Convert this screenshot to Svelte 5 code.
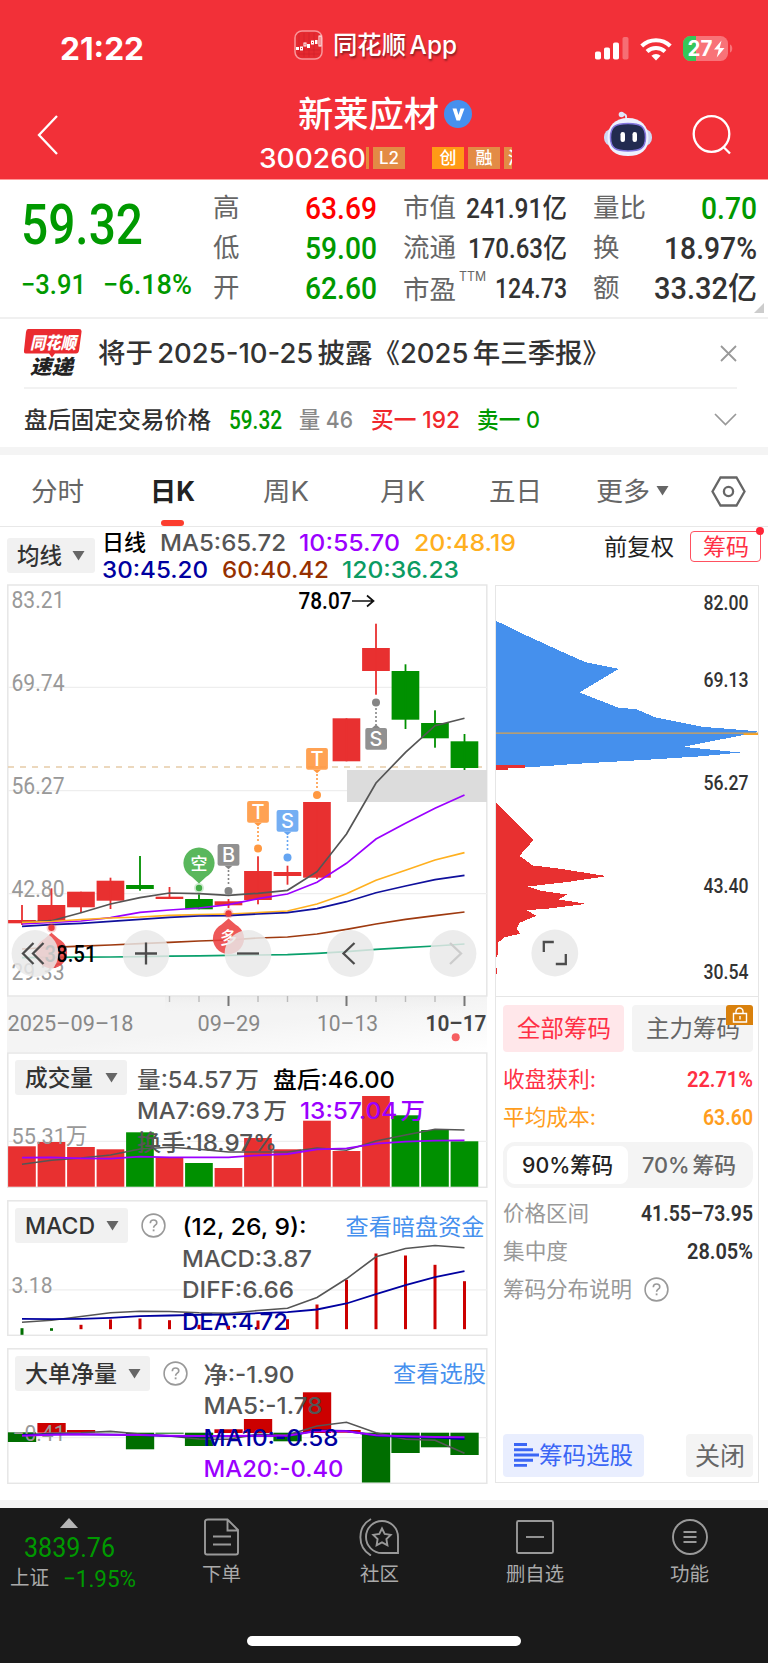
<script lang="ts">
  type Candle = [number, number, number, number, boolean]; // body top, body bottom, high, low, up

  const STEP = 29.5;
  const cx = (i: number) => 22 + i * STEP;
  const line = (ys: number[]) => ys.map((y, i) => `${cx(i)},${y}`).join(' ');

  const quotes = [
    [
      { label: '高', value: '63.69', w: 72, tone: 'hot' },
      { label: '低', value: '59.00', w: 72, tone: 'down' },
      { label: '开', value: '62.60', w: 72, tone: 'down' }
    ],
    [
      { label: '市值', value: '241.91亿', w: 101, tone: 'ink' },
      { label: '流通', value: '170.63亿', w: 99, tone: 'ink' },
      { label: '市盈', value: '124.73', w: 72, tone: 'ink', sup: 'TTM' }
    ],
    [
      { label: '量比', value: '0.70', w: 56, tone: 'down' },
      { label: '换', value: '18.97%', w: 93, tone: 'ink' },
      { label: '额', value: '33.32亿', w: 103, tone: 'ink' }
    ]
  ];

  const candles: Candle[] = [
    [920, 923.3, 905, 925, true],
    [905, 921, 888.3, 921, true],
    [891.7, 907.3, 891.7, 913, true],
    [880.7, 900.7, 877.7, 909, true],
    [885, 889, 856, 890.7, false],
    [896.7, 899, 887, 899, true],
    [899, 909.3, 894.3, 909.3, false],
    [901.3, 905.3, 899, 908, true],
    [871, 900, 856.3, 904.3, true],
    [872, 876, 865.7, 884.7, true],
    [802, 877.7, 802, 879, true],
    [718.3, 761.3, 718.3, 761.3, true],
    [648, 671, 623.7, 694.7, true],
    [671, 719.7, 664.3, 729, false],
    [723, 738.3, 710.3, 747.7, false],
    [741.3, 768, 734, 770, false]
  ];

  const maLines = [
    { color: '#0aa06c', ys: [957.7, 957.4, 957.2, 957, 956.7, 956.2, 955.8, 955.3, 955, 954.7, 953.3, 951.7, 949.3, 947.7, 946, 944] },
    { color: '#9e3a10', ys: [949, 947.4, 946.2, 945, 943.7, 942.3, 941, 940, 938, 937, 934, 929.3, 924, 919.3, 915.7, 912] },
    { color: '#555', ys: [922.3, 920.7, 912.7, 904, 897.7, 893, 893.7, 895.3, 893.3, 890.3, 871.7, 834, 783, 752.3, 725.7, 718.3] },
    { color: '#9b00ff', ys: [924, 922.5, 921, 917.7, 912.3, 910, 908, 904.7, 898.7, 894, 882.3, 863.3, 839, 823.3, 808.3, 795] },
    { color: '#ffb01f', ys: [922.3, 921.5, 919.5, 918, 917, 915.3, 914.7, 914, 912.7, 911, 904, 893.7, 880.3, 870.3, 860, 852.7] },
    { color: '#10109c', ys: [926.3, 924.7, 923.3, 921.3, 919.3, 917.3, 916, 915.7, 914, 912.7, 908.7, 901.7, 892.7, 886, 879.7, 875.3] }
  ];

  const priceLabels = [['83.21', 607.5], ['69.74', 691], ['56.27', 793.5], ['42.80', 896.7], ['29.33', 980.3]] as [string, number][];
  const chipLabels = [['82.00', 610], ['69.13', 687.3], ['56.27', 790.3], ['43.40', 893.7], ['30.54', 979]] as [string, number][];

  // square tags hanging above a candle
  const tags = [
    { x: 258, y: 801, dot: 848.5, text: 'T', color: '#ff9840' },
    { x: 287.5, y: 810, dot: 857.5, text: 'S', color: '#65a5f2' },
    { x: 317, y: 748, dot: 795, text: 'T', color: '#ff9840' },
    { x: 228.5, y: 844, dot: 891, text: 'B', color: '#858585' }
  ];

  const ticks = Array.from({ length: 11 }, (_, i) => i + 5);

  const volume = [1146.3, 1142, 1147, 1149.3, 1132.3, 1157.3, 1163, 1168, 1138, 1149.3, 1120.7, 1151, 1096, 1115.3, 1130, 1141.3];
  const volumeDown = [4, 6, 13, 14, 15];
  const volMa7 = [1164.3, 1160.3, 1158, 1155, 1149, 1147.3, 1149.3, 1152, 1152, 1152, 1148, 1150.3, 1141, 1135, 1129.3, 1130];
  const volMa13 = [1157.7, 1157.3, 1158.3, 1158.7, 1156.7, 1157.3, 1157.3, 1157.3, 1155.3, 1154, 1149.3, 1148.3, 1143.7, 1141.7, 1140.7, 1140.3];

  const macd = [[1327.7, 1334.3], [1327.7, 1330.3], [1324.3, 1328.7], [1319, 1328.7], [1318, 1328.7], [1319.7, 1328.7], [1324.3, 1328.7], [1325.3, 1328.7], [1320, 1328.7], [1318.7, 1328.7], [1304, 1328.7], [1279.3, 1328.7], [1253, 1328.7], [1255, 1328.7], [1264.3, 1328.7], [1280.7, 1328.7]];
  const diff = [1321.7, 1319.7, 1316, 1312.3, 1310.7, 1311, 1312.3, 1312.7, 1310, 1307.7, 1297, 1278.3, 1256.3, 1248, 1245, 1247.3];
  const dea = [1318.3, 1318.7, 1318.3, 1317.3, 1315.7, 1315, 1314.3, 1314, 1312.7, 1311.7, 1309, 1303, 1293.7, 1284.7, 1276.7, 1270.7];

  const net = [[1432.3, 1442], [1423, 1432.7], [1430, 1432.7], [1432.4, 1432.7], [1432.7, 1449.3], [1432.7, 1433.7], [1432.7, 1446], [1429.3, 1433], [1419, 1433], [1432.7, 1441.3], [1392.3, 1433], [1430, 1432.7], [1432.7, 1482.5], [1432.7, 1453], [1432.7, 1447.3], [1432.7, 1455]];
  const netUp = [1, 2, 7, 8, 10, 11];
  const netMa5 = [1435, 1433.3, 1432.7, 1431.3, 1434, 1436, 1439, 1439.3, 1434.3, 1435, 1426, 1422.3, 1432.7, 1439.3, 1440.3, 1453.3];
  const netMa10 = [1435, 1434.3, 1434.3, 1434.7, 1435, 1436, 1436.7, 1436.3, 1435.7, 1436, 1430.3, 1431, 1435.7, 1437, 1437.7, 1439];
  const netMa20 = [1435.7, 1434.7, 1434.3, 1434.7, 1435, 1435.7, 1436, 1436, 1435.7, 1435.7, 1431, 1431.3, 1435.3, 1436.3, 1437, 1437.3];
</script>

<!-- one line of text set to an exact width -->
{#snippet fit(text: string, w: number, size: number, cls = '')}
  <svg class="fit {cls}" width={w} height={size}>
    <text x="0" y={size * 0.87} font-size={size} textLength={w} lengthAdjust="spacingAndGlyphs">{text}</text>
  </svg>
{/snippet}

{#snippet label(text: string, x: number, y: number, w: number, size: number, cls: string)}
  <text {x} {y} font-size={size} textLength={w} lengthAdjust="spacingAndGlyphs" class={cls}>{text}</text>
{/snippet}

{#snippet caret()}
  <svg width="13" height="10" viewBox="0 0 13 10"><path d="M.5 0h12L6.500 9.500z" fill="#666" /></svg>
{/snippet}

{#snippet help()}
  <svg width="25" height="25" viewBox="0 0 25 25" fill="none" stroke="#999" stroke-width="1.6">
    <circle cx="12.500" cy="12.500" r="11.400" />
    <path d="M9.300 10.200c0-2 1.400-3.200 3.300-3.200s3.200 1.200 3.200 2.900c0 2.300-3.200 2.300-3.200 4.800" />
    <path d="M12.600 16.400v1.900" stroke-width="1.800" />
  </svg>
{/snippet}

{#snippet round(x: number, icon: string, faded = false)}
  <circle cx={x} cy="953.5" r="23.4" fill="#e8e8e8" opacity=".84" />
  <path d={icon} transform="translate({x} 953.5)" fill="none" stroke={faded ? '#ccc' : '#4c4c4c'} stroke-width="2.3" />
{/snippet}

<div class="app">
  <header>
    <div class="status">
      <div class="time">{@render fit('21:22', 84, 31)}</div>
      <div class="source">
        <svg width="29" height="30" viewBox="0 0 29 30">
          <rect x="1" y="1" width="27" height="28" rx="7" fill="#e52a30" stroke="#f9969a" stroke-width="1.500" />
          <path d="M5 3v24M10 3v24M15 3v24M20 3v24M3 20h23M3 24h23" stroke="#c81f28" stroke-width=".5" />
          <g fill="#fff"><rect x="2" y="17" width="3" height="3" /><rect x="13" y="14" width="3" height="4" /><rect x="21" y="10" width="2.500" height="4" /></g>
          <g fill="none" stroke="#fff"><rect x="6.500" y="17" width="2" height="3" /><rect x="10" y="13" width="2" height="3" /><rect x="17.500" y="11" width="2" height="3" /><rect x="25" y="6" width="2" height="10" /></g>
        </svg>
        {@render fit('同花顺 App', 124, 25)}
      </div>
      <div class="signals">
        <svg width="34" height="23" viewBox="0 0 34 23" fill="#fff">
          <rect y="14.500" width="6" height="8" rx="1.800" /><rect x="9" y="10.500" width="6" height="12" rx="1.800" />
          <rect x="18" y="5.500" width="6" height="17" rx="1.800" /><rect x="27.500" y="0" width="6" height="22.500" rx="1.800" opacity=".3" />
        </svg>
        <svg width="32" height="24" viewBox="0 0 32 24" fill="none" stroke="#fff" stroke-width="4">
          <path d="M1.700 9a20.500 20.500 0 0 1 28.600 0M7 14.500a13 13 0 0 1 18 0" />
          <path d="M16 23.500l-4.600-4.700a6.500 6.500 0 0 1 9.200 0z" fill="#fff" stroke="none" />
        </svg>
        <svg width="50" height="26" viewBox="0 0 50 26">
          <rect width="45" height="25" rx="7.500" fill="#f87378" />
          <path d="M13 0H7.500A7.500 7.500 0 0 0 0 7.500v10A7.500 7.500 0 0 0 7.500 25H13z" fill="#35c759" />
          <path d="M47 8.500c3 1 3 7 0 8z" fill="#f87378" />
          <text x="4.500" y="20.300" font-size="21" font-weight="700" fill="#fff" textLength="25" lengthAdjust="spacingAndGlyphs">27</text>
          <path d="M38.500 4.500l-7.500 9h4.700l-2 8 7.800-9.500h-4.800z" fill="#fff" />
        </svg>
      </div>
    </div>
    <div class="titlebar">
      <svg class="back" width="22" height="42" viewBox="0 0 22 42" fill="none" stroke="#fff" stroke-width="2.300"><path d="M20 2L2 21l18 19" /></svg>
      <div class="stock">
        <div class="name">
          {@render fit('新莱应材', 141, 35.500)}
          <svg width="28" height="28" viewBox="0 0 28 28"><circle cx="14" cy="14" r="14" fill="#4690ee" /><path d="M8.500 8.500h4l2 6.500 2-6.500h4l-4.500 12h-3.500z" fill="#fff" /></svg>
        </div>
        <div class="code">
          {@render fit('300260', 107, 27.500)}
          <i class="bar"></i><span class="tag">L2</span><span class="tag gem">创</span><span class="tag">融</span><span class="tag cut">沪</span>
        </div>
      </div>
      <svg class="robot" width="50" height="46" viewBox="0 0 50 46">
        <path d="M23 8c1-4-1-5-4-5" fill="none" stroke="#dfe6fb" stroke-width="2" /><circle cx="18.500" cy="3.500" r="2.800" fill="#dfe6fb" />
        <rect x="1" y="18" width="48" height="17" rx="8" fill="#cfd7f2" />
        <path d="M25 7c13 0 20.500 8 20.500 20S38 45 25 45 4.500 39 4.500 27 12 7 25 7z" fill="#edf1ff" />
        <path d="M25 12.500c13 0 17.500 3 17.500 14S37 40 25 40 7.500 37.500 7.500 26.500 12 12.500 25 12.500z" fill="#222b50" stroke="#8476df" stroke-width="1.500" />
        <rect x="17.500" y="21" width="4.500" height="10" rx="2.200" fill="#fff" /><rect x="29.500" y="21" width="4.500" height="10" rx="2.200" fill="#fff" />
      </svg>
      <svg class="search" width="40" height="40" viewBox="0 0 40 40" fill="none" stroke="#fff" stroke-width="2.300"><circle cx="19.500" cy="19" r="17.800" /><path d="M31.500 32l6.500 6.500" /></svg>
    </div>
  </header>

  <section class="quote">
    <div class="last down">
      {@render fit('59.32', 122, 55, 'din')}
      <div class="change">{@render fit('−3.91', 65, 28, 'din')}{@render fit('−6.18%', 89, 28, 'din')}</div>
    </div>
    {#each quotes as col, c}
      <div class="col">
        {#each col as q}
          <div class="row">
            <span class="key" class:low={q.sup}>{@render fit(q.label, q.label.length * 26.500, 26.500)}</span>
            {#if q.sup}<span class="sup">{@render fit(q.sup, 27, 13)}</span>{/if}
            <span class="val {q.tone}">{@render fit(q.value, q.w, c === 1 ? 27 : 31, 'din')}</span>
          </div>
        {/each}
      </div>
    {/each}
    <i class="corner"></i>
  </section>

  <section class="notice">
    <svg width="58" height="48" viewBox="0 0 58 48">
      <path d="M4 0h51q3 0 2.500 3L55 21.500q-.5 3-3 3H31l-3 4-3-4H2q-2.500 0-2-3L2 3q.5-3 2-3z" fill="#ea2b30" />
      <g font-weight="900" font-style="italic">
        <text x="6" y="19.500" font-size="17" fill="#fff" textLength="46" lengthAdjust="spacingAndGlyphs">同花顺</text>
        <text x="6" y="44.500" font-size="20" fill="#222" textLength="43" lengthAdjust="spacingAndGlyphs">速递</text>
      </g>
    </svg>
    <span class="headline">{@render fit('将于 2025-10-25 披露《2025 年三季报》', 512, 27)}</span>
    <svg width="17" height="17" viewBox="0 0 17 17" stroke="#999" stroke-width="1.800"><path d="M1 1l15 15M16 1L1 16" /></svg>
  </section>

  <section class="after">
    <span class="ink">{@render fit('盘后固定交易价格', 187, 23)}</span>
    <span class="down">{@render fit('59.32', 53, 25, 'din')}</span>
    <span class="muted">{@render fit('量 46', 54, 23)}</span>
    <span class="up">{@render fit('买一 192', 89, 23)}</span>
    <span class="down">{@render fit('卖一 0', 63, 23)}</span>
    <svg width="23" height="13" viewBox="0 0 23 13" fill="none" stroke="#999" stroke-width="1.700"><path d="M1 1l10.500 10.500L22 1" /></svg>
  </section>

  <nav class="tabs">
    <span>{@render fit('分时', 53, 26.500)}</span>
    <span class="active">{@render fit('日K', 45, 26.500)}</span>
    <span>{@render fit('周K', 46, 26.500)}</span>
    <span>{@render fit('月K', 45, 26.500)}</span>
    <span>{@render fit('五日', 53, 26.500)}</span>
    <span class="more">{@render fit('更多', 54, 26.500)}{@render caret()}</span>
    <svg width="35" height="31" viewBox="0 0 35 31" fill="none" stroke="#666" stroke-width="2.300"><path d="M9.500 1.500h16l8 14-8 14h-16l-8-14z" /><circle cx="17.500" cy="15.500" r="4.600" /></svg>
  </nav>

  <section class="legend">
    <button class="drop">{@render fit('均线', 45, 22.500)}{@render caret()}</button>
    <div class="averages">
      <div>
        <span class="black">{@render fit('日线', 44, 22)}</span>
        <span class="gray">{@render fit('MA5:65.72', 126, 23)}</span>
        <span class="purple">{@render fit('10:55.70', 101, 23)}</span>
        <span class="amber">{@render fit('20:48.19', 102, 23)}</span>
      </div>
      <div>
        <span class="navy">{@render fit('30:45.20', 106, 23)}</span>
        <span class="brown">{@render fit('60:40.42', 107, 23)}</span>
        <span class="teal">{@render fit('120:36.23', 117, 23)}</span>
      </div>
    </div>
    <span class="adjust">{@render fit('前复权', 70, 23)}</span>
    <span class="chipbtn">{@render fit('筹码', 46, 23)}</span>
  </section>

  <main>
    <div class="left">
      <svg class="kline" width="481" height="468" viewBox="7 584 481 468">
        <defs>
          <linearGradient id="axisfade" x1="0" y1="0" x2="1" y2="1"><stop offset=".5" stop-color="#f4f4f4" /><stop offset="1" stop-color="#fff" /></linearGradient>
          <linearGradient id="axisshade" x1="0" y1="0" x2="0" y2="1"><stop offset="0" stop-color="#e9e9e9" /><stop offset="1" stop-color="#f4f4f4" stop-opacity="0" /></linearGradient>
        </defs>
        <rect x="7" y="996" width="480" height="56" fill="url(#axisfade)" />
        <rect x="165" y="996" width="300" height="18" fill="url(#axisshade)" opacity=".6" />
        <rect x="7.800" y="585" width="479" height="411" fill="#fff" stroke="#e6e6e6" stroke-width="1.500" />
        <path d="M8 687.300H487M8 790.700H487M8 893.700H487" stroke="#eee" stroke-width="1.300" />
        <rect x="347" y="770" width="140" height="32" fill="#dcdcdc" />
        <path d="M8 767H487" stroke="#e6cba8" stroke-width="1.600" stroke-dasharray="6 6" />
        {#each priceLabels as [text, y]}
          {@render label(text, 11.500, y, 53, 23, 'din axis')}
        {/each}
        {#each candles as [top, bottom, high, low, up], i}
          <g fill={up ? '#e83030' : '#009000'}>
            <rect x={cx(i) - 13.9} y={top} width="27.7" height={bottom - top} />
            <rect x={cx(i) - 0.9} y={high} width="1.8" height={low - high} />
          </g>
        {/each}
        {#each maLines as ma}
          <polyline points={line(ma.ys)} fill="none" stroke={ma.color} stroke-width="1.7" />
        {/each}
        {@render label('78.07', 298.500, 609, 53, 23, 'din black')}
        <path d="M352 601h21M367 595.500l6.500 5.500-6.500 5.500" fill="none" stroke="#111" stroke-width="1.700" />

        {#each tags as t}
          <g fill={t.color}>
            <rect x={t.x - 10.9} y={t.y} width="21.8" height="21.8" rx="2" opacity=".9" />
            <path d="M{t.x - 4} {t.y + 21.8}h8l-4 3.500z" />
            <path d="M{t.x} {t.y + 26}V{t.dot - 6}" stroke={t.color} stroke-width="1.6" stroke-dasharray="2 2" />
            <circle cx={t.x} cy={t.dot} r="4" />
            <text x={t.x} y={t.y + 18} class="mark" font-size="20">{t.text}</text>
          </g>
        {/each}
        <g fill="#858585">
          <circle cx="376" cy="702.500" r="4" />
          <path d="M376 708v17" stroke="#858585" stroke-width="1.600" stroke-dasharray="2 2" />
          <path d="M372 728h8l-4-3.500z" />
          <rect x="365.300" y="728" width="21.700" height="21.700" rx="2" opacity=".9" />
          <text x="376" y="746" class="mark" font-size="20">S</text>
        </g>
        <g fill="#42ad46">
          <path d="M199 883.500l-7-6.500a15.600 15.600 0 1 1 14 0z" opacity=".88" />
          <circle cx="199" cy="888" r="3.200" /><circle cx="199" cy="888" r="5" opacity=".25" />
          <text x="199" y="870" class="mark" font-size="17">空</text>
        </g>
        {#each [[51.500, 932.700], [228.500, 918.500]] as [x, y]}
          <g fill="#eb3c3c">
            <path d="M{x} {y}l-7 6a15.600 15.600 0 1 0 14 0z" opacity=".86" />
            <circle cx={x} cy={y - 5} r="3.2" /><circle cx={x} cy={y - 5} r="5" opacity=".25" />
          </g>
        {/each}
        <text x="228.500" y="943.500" class="mark" font-size="17">多</text>
        {@render label('38.51', 44.500, 961.500, 52, 23, 'din black')}

        {@render round(35, 'M-1.500-10.500L-12 0l10.500 10.500M8.500-10.500L-2 0l10.500 10.500')}
        {@render round(146, 'M-11 0H11M0-11V11')}
        {@render round(248, 'M-11 0H11')}
        {@render round(350.500, 'M4-10.500L-7 0 4 10.500')}
        {@render round(453, 'M-3-10.500L8 0-3 10.500', true)}

        {#each ticks as i}
          {@const major = i === 7 || i === 11 || i === 15}
          <path d="M{cx(i)} 996v{major ? 10 : 6}" stroke={major ? '#777' : '#bbb'} stroke-width={major ? 2 : 1.4} />
        {/each}
        {@render label('2025–09–18', 7.500, 1031, 126, 22.500, 'din date')}
        {@render label('09–29', 197.500, 1031, 63, 22.500, 'din date')}
        {@render label('10–13', 317, 1031, 61, 22.500, 'din date')}
        {@render label('10–17', 425.500, 1031, 61, 22.500, 'din date now')}
        <circle cx="455.700" cy="1037.200" r="4" fill="#f65f61" />
      </svg>

      <div class="panel">
        <svg width="481" height="136" viewBox="7 1052 481 136">
          <rect x="7.800" y="1053" width="479" height="134.300" fill="#fff" stroke="#e6e6e6" stroke-width="1.500" />
          <path d="M8 1141.300H487" stroke="#eee" stroke-width="1.300" />
          {#each volume as top, i}
            <rect x={cx(i) - 13.9} y={top} width="27.7" height={1186.7 - top} fill={volumeDown.includes(i) ? '#009000' : '#e83030'} />
          {/each}
          {@render label('55.31万', 11.500, 1144, 76, 22.500, 'din axis')}
          {@render label('量:54.57 万', 137, 1087.500, 122, 23, 'gray')}
          {@render label('盘后:46.00', 273, 1087.500, 122, 23, 'black')}
          {@render label('MA7:69.73 万', 137, 1118.700, 150, 23, 'gray')}
          {@render label('13:57.04 万', 300, 1118.700, 125, 23, 'purple')}
          {@render label('换手:18.97%', 137, 1150.500, 140, 23, 'gray')}
          <polyline points={line(volMa7)} fill="none" stroke="#555" stroke-width="1.600" />
          <polyline points={line(volMa13)} fill="none" stroke="#9b00ff" stroke-width="1.800" />
        </svg>
        <div class="tools"><button class="drop">{@render fit('成交量', 68, 23)}{@render caret()}</button></div>
      </div>

      <div class="panel">
        <svg width="481" height="136" viewBox="7 1199.500 481 136">
          <rect x="7.800" y="1200.300" width="479" height="134.500" fill="#fff" stroke="#e6e6e6" stroke-width="1.500" />
          <path d="M8 1289.300H487" stroke="#eee" stroke-width="1.300" />
          {@render label('3.18', 11.500, 1292.500, 41, 22.500, 'din axis')}
          {@render label('(12, 26, 9):', 182.500, 1234, 124, 23, 'black')}
          {@render label('MACD:3.87', 182, 1266, 130, 23, 'gray')}
          {@render label('DIFF:6.66', 182, 1297.700, 112, 23, 'gray')}
          {@render label('DEA:4.72', 182, 1329, 106, 23, 'navy')}
          {@render label('查看暗盘资金', 345.500, 1234, 139, 23, 'link')}
          {#each macd as [top, bottom], i}
            <rect x={cx(i) - 1.5} y={top} width="3" height={bottom - top} fill={i < 2 ? '#006e00' : '#cc0000'} />
          {/each}
          <polyline points={line(diff)} fill="none" stroke="#555" stroke-width="1.600" />
          <polyline points={line(dea)} fill="none" stroke="#0000a0" stroke-width="1.800" />
        </svg>
        <div class="tools"><button class="drop tight">{@render fit('MACD', 70, 23)}{@render caret()}</button>{@render help()}</div>
      </div>

      <div class="panel">
        <svg width="481" height="136" viewBox="7 1348 481 136">
          <rect x="7.800" y="1348.800" width="479" height="134.500" fill="#fff" stroke="#e6e6e6" stroke-width="1.500" />
          <path d="M8 1437.700H487" stroke="#eee" stroke-width="1.300" />
          {#each net as [top, bottom], i}
            <rect x={cx(i) - 14.1} y={top} width="28.3" height={bottom - top} fill={netUp.includes(i) ? '#cc0000' : '#006e00'} />
          {/each}
          {@render label('−0.41', 12.500, 1440.500, 53, 22.500, 'din axis')}
          <polyline points={line(netMa5)} fill="none" stroke="#555" stroke-width="1.600" />
          <polyline points={line(netMa10)} fill="none" stroke="#0000a0" stroke-width="1.800" />
          <polyline points={line(netMa20)} fill="none" stroke="#9b00ff" stroke-width="2" />
          {@render label('净:-1.90', 203.500, 1382.500, 91, 23, 'gray')}
          {@render label('MA5:-1.78', 203.500, 1414, 119, 23, 'gray')}
          {@render label('MA10:-0.58', 203.500, 1445.700, 135, 23, 'navy')}
          {@render label('MA20:-0.40', 203.500, 1477, 140, 23, 'purple')}
          {@render label('查看选股', 393, 1382, 93, 23, 'link')}
        </svg>
        <div class="tools"><button class="drop tight">{@render fit('大单净量', 92, 23)}{@render caret()}</button>{@render help()}</div>
      </div>
    </div>

    <aside>
      <svg class="chips" width="262" height="410" viewBox="496.500 586.500 262 410">
        <g transform="translate(490 580) scale(.33333)" shape-rendering="crispEdges">
          <path d="M18 124L50 138 115 170 220 218 288 248 388 268 270 339 388 385 440 389 498 414 640 442 765 452 810 457 765 466 580 502 752 519 640 530 470 541 260 553 155 561 18 564z" fill="#4590ed" />
          <path d="M18 558h88v8H55v5H18zM18 668L132 782 90 829 130 858 200 866 352 890 230 908 115 921 155 934 232 945 208 960 290 973 180 987 112 992 140 1009 90 1030 82 1048 92 1063 45 1073 25 1090V1125L18 1138zM18 1167h6v17h-6z" fill="#e83030" />
        </g>
        <path d="M744 734.500h16" stroke="#ffa21a" stroke-width="2" />
        <path d="M495 733.600h265" stroke="#d8a24f" stroke-width="1.300" />
        {#each chipLabels as [text, y]}
          {@render label(text, 704, y, 45, 19.500, 'din ink')}
        {/each}
        {@render round(555.300, 'M-1-11H-11V-1M11 1V11H1')}
      </svg>
      <div class="detail">
        <div class="pair">
          <span class="choice on">{@render fit('全部筹码', 94, 23.500)}</span>
          <span class="choice">
            {@render fit('主力筹码', 94, 23.500)}
            <svg class="lock" width="27" height="20" viewBox="0 0 27 20"><rect width="27" height="20" rx="3" fill="#d9810d" /><rect y="10" width="27" height="10" fill="#d9810d" /><path d="M7.500 8.500h13v8.500h-13zM10 8V6.500a3.500 3.500 0 0 1 7 0V8M14 11v3.500" fill="none" stroke="#fff" stroke-width="1.400" /></svg>
          </span>
        </div>
        <div class="stat red">{@render fit('收盘获利:', 93, 21.500)}{@render fit('22.71%', 66, 21.500, 'din')}</div>
        <div class="stat orange">{@render fit('平均成本:', 93, 21.500)}{@render fit('63.60', 50, 21.500, 'din')}</div>
        <div class="switch">
          <span class="on">{@render fit('90%筹码', 91, 22)}</span>
          <span>{@render fit('70% 筹码', 94, 22)}</span>
        </div>
        <div class="stat">{@render fit('价格区间', 86, 21.500)}{@render fit('41.55–73.95', 112, 21.500, 'din ink')}</div>
        <div class="stat">{@render fit('集中度', 65, 21.500)}{@render fit('28.05%', 66, 21.500, 'din ink')}</div>
        <div class="stat info">{@render fit('筹码分布说明', 129, 21.500)}{@render help()}</div>
        <div class="actions">
          <span class="pick">
            <svg width="25" height="24" viewBox="0 0 25 24" stroke="#3b66f5" stroke-width="2.900"><path d="M0 1.500h13M0 6.700h19M0 12h25M0 17.200h19M0 22.400h13" /></svg>
            {@render fit('筹码选股', 94, 24)}
          </span>
          <span class="close">{@render fit('关闭', 50, 25)}</span>
        </div>
      </div>
    </aside>
  </main>

  <footer>
    <div class="index">
      <svg width="18" height="10" viewBox="0 0 18 10"><path d="M9 0l9 10H0z" fill="#b5b5b5" /></svg>
      {@render fit('3839.76', 91, 28, 'din down')}
      <div>{@render fit('上证', 39, 20)}{@render fit('−1.95%', 73, 24, 'din down')}</div>
    </div>
    <div class="item">
      <svg width="38" height="38" viewBox="0 0 38 38" fill="none" stroke="#999" stroke-width="1.900"><path d="M5 1.500h19.500L35 12v22.500q0 2-2 2H4q-2 0-2-2v-31q0-2 3-2zM24.500 2v10.500H35M10 18.500h18M10 26.500h18" /></svg>
      {@render fit('下单', 39, 19.500)}
    </div>
    <div class="item">
      <svg width="40" height="38" viewBox="0 0 40 38" fill="none" stroke="#999" stroke-width="1.900"><path d="M12 1A21 21 0 0 0 12 37.500M23 3a16 16 0 0 0 0 32h16V19A16 16 0 0 0 23 3z" /><path d="M23 10.500l2.700 5.500 6 .9-4.300 4.300 1 6.100-5.400-2.900-5.400 2.900 1-6.100-4.300-4.300 6-.9z" /></svg>
      {@render fit('社区', 39, 19.500)}
    </div>
    <div class="item">
      <svg width="38" height="38" viewBox="0 0 38 38" fill="none" stroke="#999" stroke-width="1.900"><rect x="1" y="3" width="36" height="32" rx="1.500" /><path d="M10 19h18" /></svg>
      {@render fit('删自选', 58, 19.500)}
    </div>
    <div class="item">
      <svg width="38" height="38" viewBox="0 0 38 38" fill="none" stroke="#999" stroke-width="1.900"><circle cx="19" cy="19" r="17" /><path d="M12.500 14h13M12.500 19h13M12.500 24h13" /></svg>
      {@render fit('功能', 39, 19.500)}
    </div>
    <i class="home"></i>
  </footer>
</div>

<style>
  :global(body) { margin: 0; background: #fff; }
  .app {
    width: 768px;
    height: 1663px;
    overflow: hidden;
    display: flex;
    flex-direction: column;
    font-family: Inter, "Noto Sans CJK SC", sans-serif;
    font-weight: 500;
    color: #666;
    background: #fff;
  }
  .app > * { flex: none; box-sizing: border-box; }
  svg { display: block; flex: none; }
  .fit { overflow: visible; fill: currentColor; }
  .din { font-family: Roboto, "Noto Sans CJK SC", sans-serif; font-weight: 500; }

  .down { color: #009900; fill: #009900; }
  .up { color: #f0282d; }
  .hot { color: #ff0000; }
  .ink { color: #333; fill: #333; }
  .muted { color: #888; }
  .gray { color: #555; fill: #555; }
  .black { color: #000; fill: #000; }
  .purple { color: #9b00ff; fill: #9b00ff; }
  .amber { color: #ffb01f; }
  .navy { color: #0000a0; fill: #0000a0; }
  .brown { color: #963000; }
  .teal { color: #0b9b63; }
  .link { fill: #4690ee; font-weight: 400; }
  .axis { fill: #999; font-weight: 400; }
  .date { fill: #888; font-weight: 400; }
  .date.now { fill: #444; font-weight: 600; }
  .mark { fill: #fff; text-anchor: middle; }
  .panel .gray, .panel .purple, .headline, .source, .switch { word-spacing: -3px; }

  header { height: 180px; background: #f23038; color: #fff; border-bottom: 1px solid #f99; }
  .status {
    height: 94px;
    padding: 0 37px 0 60px;
    display: grid;
    grid-template-columns: 234px 301px 1fr;
    align-items: center;
  }
  .time { font-weight: 700; padding-top: 3px; }
  .source { display: flex; align-items: center; gap: 10px; padding-bottom: 5px; text-shadow: 1px 2px 2px #8a2025; }
  .signals { display: flex; align-items: center; gap: 11px; padding-top: 3px; }
  .titlebar { display: grid; grid-template-columns: 222px 344px 89px 1fr; padding-left: 37px; }
  .back { margin-top: 20px; }
  .robot { margin-top: 17px; }
  .search { margin-top: 21px; }
  .name { display: flex; align-items: center; gap: 5px; padding-left: 39px; height: 40px; }
  .code { display: flex; align-items: center; height: 27px; margin-top: 10px; width: 253px; overflow: hidden; }
  .bar { width: 3px; height: 22px; background: #e58a3c; flex: none; margin-right: 4px; }
  .tag {
    flex: none;
    width: 32px;
    height: 22px;
    margin-right: 4px;
    background: #e38b45;
    font-size: 17px;
    line-height: 22px;
    text-align: center;
  }
  .tag.gem { background: #ff9a16; margin-left: 23px; }
  .tag.cut { text-align: left; text-indent: 4px; }

  .quote {
    position: relative;
    height: 139px;
    border-bottom: 2px solid #f0f0f0;
    padding: 7px 0 0 21px;
    display: grid;
    grid-template-columns: 192px 190px 190px 164px;
  }
  .last { padding-top: 9px; }
  .change { display: flex; gap: 17px; margin-top: 19px; }
  .col { padding-right: 27px; }
  .col:nth-child(2) { padding-right: 26px; }
  .col:nth-child(3) { padding-right: 26px; }
  .col:nth-child(4) { padding-right: 0; }
  .row { height: 40.2px; display: flex; align-items: center; }
  .key { color: #666; font-weight: 400; }
  .key.low { padding-top: 4px; }
  .sup { align-self: flex-start; padding: 3px 0 0 3px; font-weight: 400; }
  .val { margin-left: auto; }
  .corner { position: absolute; right: 4px; bottom: 4px; border: solid transparent; border-width: 5px; border-right-color: #ccc; border-bottom-color: #ccc; }

  .notice {
    height: 70px;
    margin: 0 31px 0 24px;
    border-bottom: 2px solid #f2f2f2;
    display: flex;
    align-items: center;
    color: #333;
  }
  .notice > svg:first-child { margin-bottom: 1px; }
  .headline { margin: 0 auto 1px 16px; }
  .after {
    height: 58px;
    padding: 3px 31px 0 24px;
    display: flex;
    align-items: center;
    gap: 17.5px;
  }
  .after > svg { margin-left: auto; }

  .tabs {
    height: 80px;
    border-top: 8px solid #f4f4f4;
    border-bottom: 1.5px solid #e8e8e8;
    padding: 1px 0 0 31px;
    display: grid;
    grid-template-columns: 119px 113px 117px 109px 107px 115px 1fr;
    align-items: center;
    font-weight: 400;
  }
  .active { position: relative; color: #222; font-weight: 700; }
  .active::after {
    content: "";
    position: absolute;
    left: 11px;
    top: 42px;
    width: 23px;
    height: 6px;
    border-radius: 3px;
    background: #fc3d2e;
  }
  .more { display: flex; align-items: center; gap: 6px; }

  .legend { height: 57px; padding: 0 7px; display: flex; }
  .drop {
    border: 0;
    height: 35px;
    padding: 0 9px 0 10px;
    border-radius: 3px;
    background: #f1f1f1;
    color: #333;
    display: flex;
    align-items: center;
    gap: 12px;
    font: inherit;
  }
  .drop.tight { gap: 11px; }
  .legend .drop { margin-top: 11px; width: 88px; gap: 10px; }
  .averages { width: 507px; padding-left: 7px; }
  .averages div { display: flex; gap: 13.5px; padding-top: 3.5px; }
  .averages div:first-child { height: 24px; }
  .averages .fit { height: 23px; }
  .adjust { color: #222; padding: 8px 0 0; margin-left: -5px; margin-right: 16px; font-weight: 400; }
  .chipbtn {
    position: relative;
    height: 29px;
    margin-top: 4px;
    padding: 0 11.5px;
    display: flex;
    align-items: center;
    border: 1.5px solid #ff5160;
    border-radius: 4px;
    color: #ff3044;
    font-weight: 400;
  }
  .chipbtn::after { content: ""; position: absolute; right: -4px; top: -5px; width: 8px; height: 8px; border-radius: 50%; background: #ff2638; }

  main { height: 916px; display: flex; gap: 7px; padding-left: 7px; }
  .left { width: 481px; }
  .panel { position: relative; margin-bottom: 12px; }
  .tools { position: absolute; left: 8px; top: 8px; display: flex; align-items: center; gap: 13px; }

  aside { width: 262px; height: 895.5px; border: 1.5px solid #e6e6e6; margin-top: 1px; box-sizing: content-box; }
  .chips { border-bottom: 1.5px solid #e6e6e6; }
  .detail { padding: 8px 7px 0; height: 475.5px; display: flex; flex-direction: column; }
  .pair { display: flex; justify-content: space-between; width: 250px; margin-bottom: 8px; }
  .choice {
    position: relative;
    width: 121px;
    height: 47px;
    border-radius: 4px;
    background: #f4f4f4;
    display: flex;
    align-items: center;
    justify-content: center;
    font-weight: 400;
  }
  .choice.on { background: #ffe7ea; color: #ff2f45; }
  .lock { position: absolute; right: 0; top: 0; }
  .stat { width: 250px; height: 37.5px; display: flex; align-items: center; justify-content: space-between; color: #999; font-weight: 400; }
  .stat .din { font-weight: 600; }
  .stat.red { color: #ff3044; }
  .stat.orange { color: #ff9d1c; }
  .stat.info { justify-content: flex-start; gap: 12px; height: 40px; }
  .switch {
    box-sizing: border-box;
    width: 250px;
    height: 46px;
    margin: 7px 0 6px;
    padding: 4px;
    border-radius: 12px;
    background: #f4f4f4;
    display: flex;
  }
  .switch span { flex: 1; display: flex; align-items: center; justify-content: center; border-radius: 8px; }
  .switch .on { background: #fff; color: #222; }
  .actions { display: flex; justify-content: space-between; width: 250px; margin-top: auto; padding-bottom: 4px; }
  .pick, .close { height: 43px; display: flex; align-items: center; justify-content: center; border-radius: 4px; font-weight: 400; }
  .pick { width: 141px; background: #e9eefe; color: #3b66f5; }
  .close { width: 67px; background: #f4f4f4; }

  footer {
    position: relative;
    height: 163px;
    border-top: 8px solid #f4f4f4;
    background: #1a1a1a;
    color: #aaa;
    display: grid;
    grid-template-columns: 148px 147px 168px 143px 1fr;
    font-weight: 400;
  }
  .index { display: flex; flex-direction: column; align-items: center; padding-top: 10px; width: 138px; }
  .index .fit { margin-top: 5px; }
  .index div { display: flex; gap: 14px; align-items: center; padding-left: 8px; }
  .index .din { font-weight: 400; }
  .item { display: flex; flex-direction: column; align-items: center; gap: 8px; padding-top: 10px; }
  .item:nth-child(5) { padding-left: 5px; }
  .home { position: absolute; left: 247px; bottom: 17px; width: 274px; height: 10px; border-radius: 5px; background: #fff; }
</style>
